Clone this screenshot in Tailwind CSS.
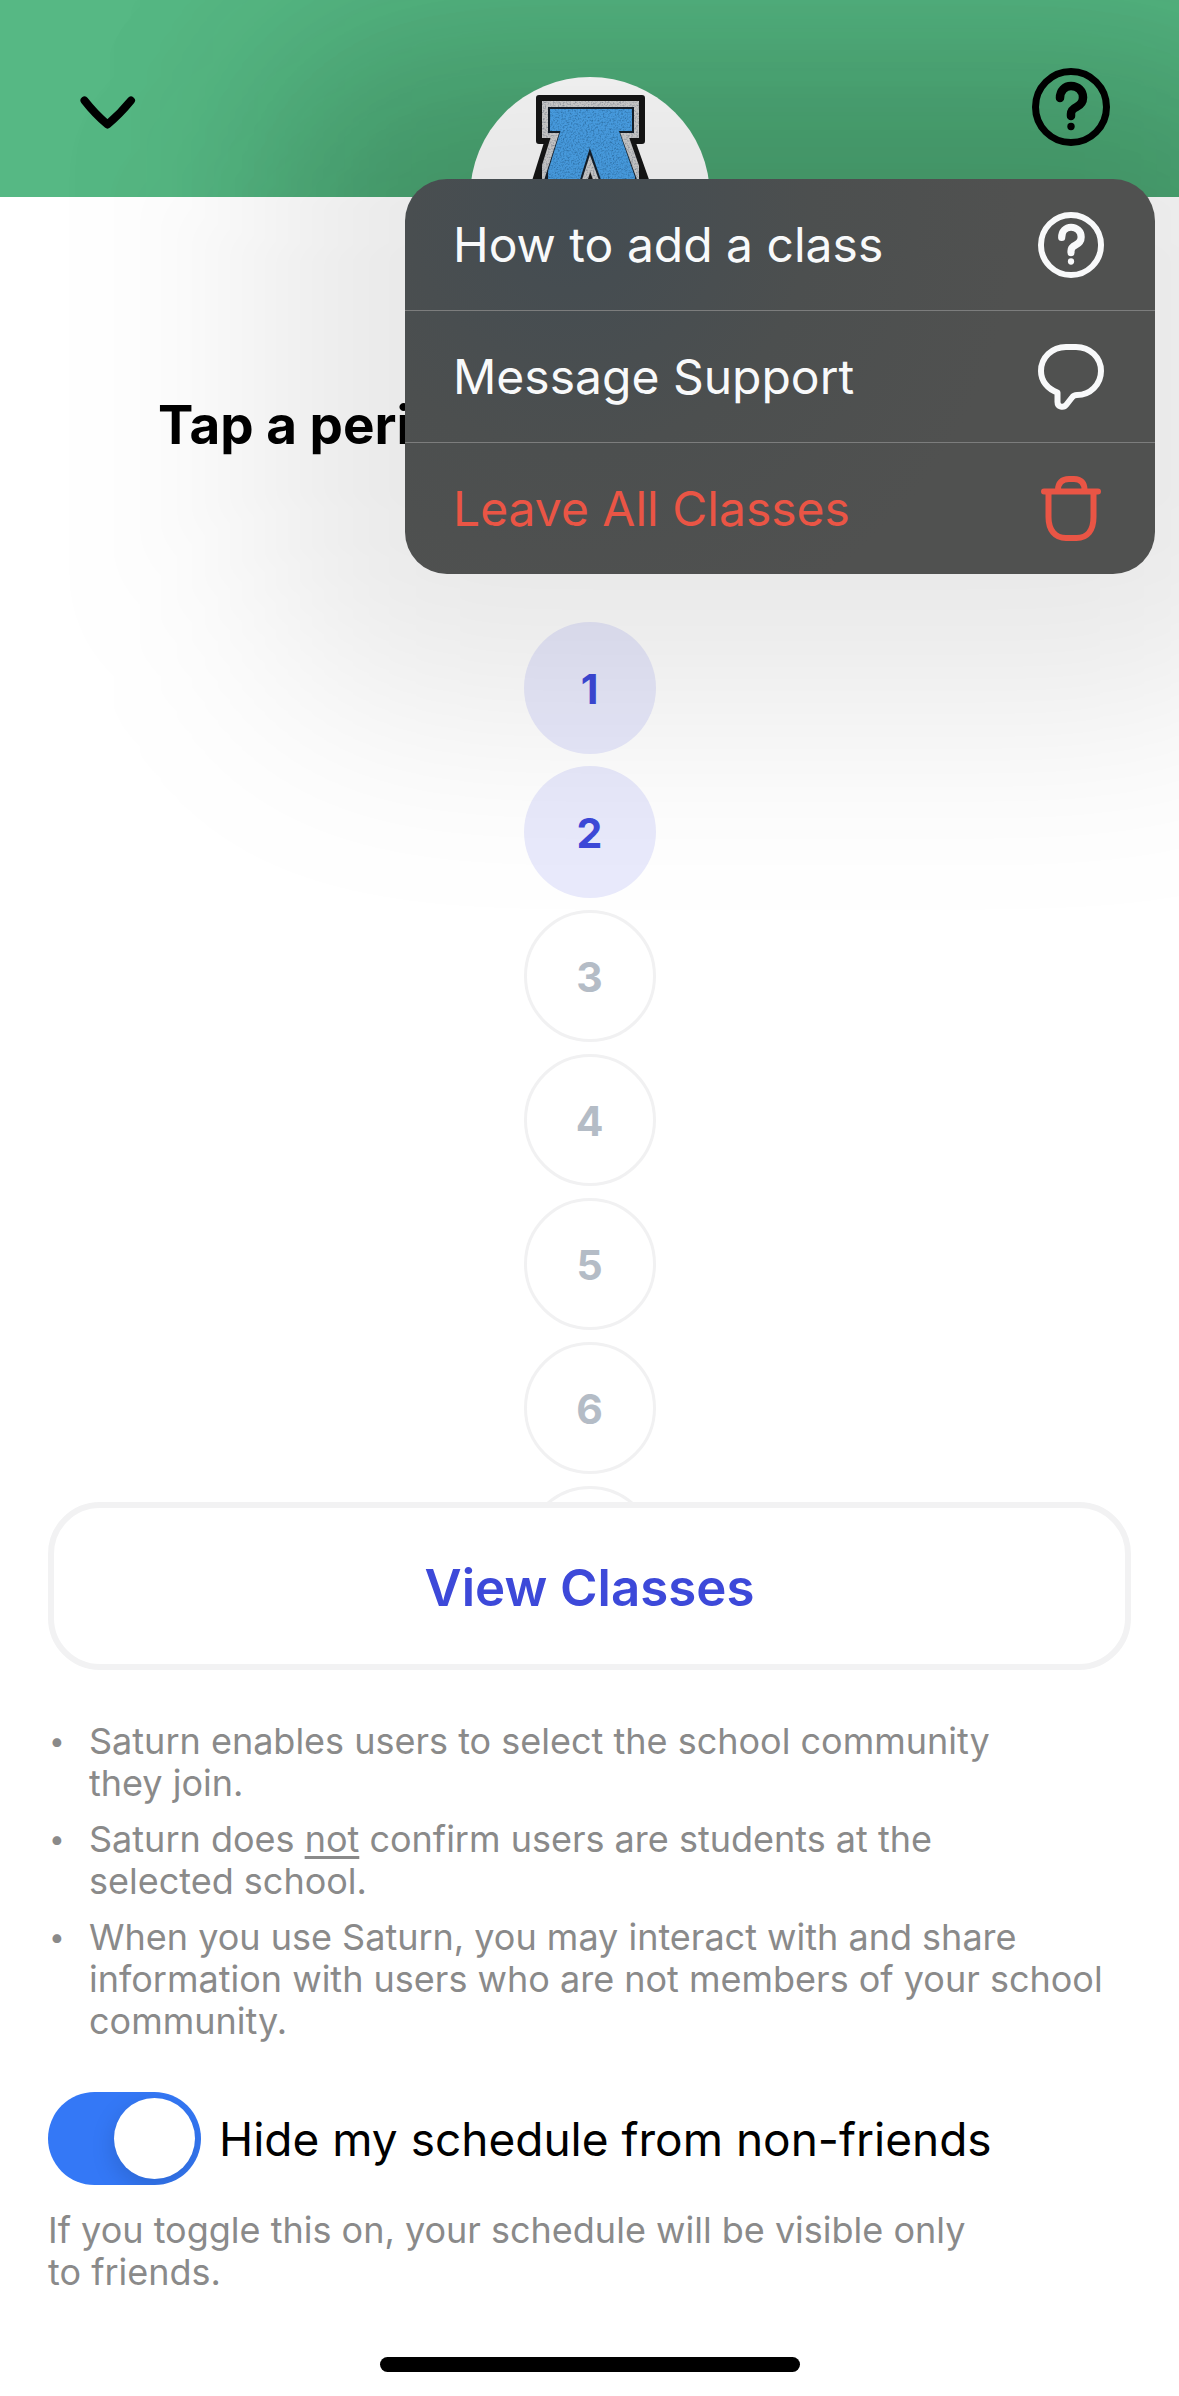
<!DOCTYPE html>
<html lang="en">

<head>
    <meta charset="UTF-8">
    <meta name="viewport" content="width=device-width, initial-scale=1.0">
    <title>Classes | Saturn</title>
    <script src="https://cdn.jsdelivr.net/npm/@tailwindcss/browser@4"></script>
</head>

<body class="font-['Inter','Liberation_Sans',sans-serif] bg-white text-black">
    <div class="relative flex flex-col h-screen overflow-hidden">

        <!-- Header -->
        <header class="relative grid grid-cols-3 items-start h-[197px] shrink-0 overflow-hidden bg-[#56b884]">
            <!-- Extra shade the menu casts on the green bar -->
            <div class="absolute top-[50px] -right-[110px] w-[1010px] h-[650px] rounded-[120px] bg-[#002800]/16 blur-[100px]"></div>

            <button class="relative justify-self-start ml-20 mt-24" aria-label="Close">
                <svg class="block w-14 h-[33px]" viewBox="0 0 56 33" fill="none" stroke="black" stroke-width="8"
                    stroke-linecap="round" stroke-linejoin="round">
                    <path d="M4.5 4.5Q15 18 27.500 28.500Q40 18 51 4.500" />
                </svg>
            </button>

            <div class="relative justify-self-center mt-[77px] size-60 rounded-full bg-[#fdfdfd] overflow-hidden">
                <!-- School emblem -->
                <svg class="block size-full" viewBox="0 0 240 240" role="img" aria-label="School emblem">
                    <defs>
                        <filter id="felt" x="0" y="0" width="1" height="1">
                            <feTurbulence type="fractalNoise" baseFrequency="0.6" numOctaves="2" result="noise" />
                            <feColorMatrix in="noise" type="matrix"
                                values="0 0 0 0 0  0 0 0 0 0.05  0 0 0 0 0.15  1.4 0 0 0 -0.6" result="grain" />
                            <feComposite in="grain" in2="SourceGraphic" operator="in" result="cut" />
                            <feMerge>
                                <feMergeNode in="SourceGraphic" />
                                <feMergeNode in="cut" />
                            </feMerge>
                        </filter>
                    </defs>
                    <g stroke="#161616" fill="#161616">
                        <rect x="67" y="19" width="107" height="47" rx="2" stroke-width="2" />
                        <line x1="109" y1="54" x2="79" y2="150" stroke-width="60" />
                        <line x1="130" y1="54" x2="164" y2="150" stroke-width="60" />
                    </g>
                    <g stroke="#d4d4d4" fill="#d4d4d4" filter="url(#felt)">
                        <rect x="72" y="24" width="97" height="37" stroke-width="0" />
                        <line x1="109" y1="50" x2="78" y2="150" stroke-width="48" />
                        <line x1="130" y1="50" x2="165" y2="150" stroke-width="48" />
                    </g>
                    <g stroke="#15202c" fill="#15202c">
                        <rect x="79" y="31" width="84" height="24" stroke-width="2" />
                        <line x1="109" y1="53" x2="78" y2="150" stroke-width="36" />
                        <line x1="130" y1="53" x2="165" y2="150" stroke-width="36" />
                    </g>
                    <g stroke="#4ea6ee" fill="#4ea6ee" filter="url(#felt)">
                        <rect x="80" y="32" width="82" height="22" stroke-width="0" />
                        <line x1="109" y1="50" x2="78" y2="150" stroke-width="33" />
                        <line x1="130" y1="50" x2="165" y2="150" stroke-width="33" />
                    </g>
                </svg>
            </div>

            <button class="relative justify-self-end mr-[69px] mt-[68px]" aria-label="Help">
                <svg class="block size-[78px]" viewBox="0 0 78 78" fill="none" stroke="black" stroke-width="7">
                    <circle cx="39" cy="39" r="35.500" />
                    <path stroke-width="8.500" stroke-linecap="round" stroke-linejoin="round"
                        d="M28 30C28 22.500 33 18 39 18C46 18 51 23 51 29.500C51 34 48.500 37 44.500 39C40.500 41 39 42.500 39 46V48" />
                    <circle cx="39" cy="58.500" r="3.700" fill="black" stroke="none" />
                </svg>
            </button>
        </header>

        <!-- Periods -->
        <main class="flex-1 min-h-0 overflow-hidden">
            <h1 class="mt-[196px] pl-[158px] text-[53px] leading-[64px] font-bold whitespace-nowrap">Tap a period to add classes</h1>
            <ul class="mt-[165px] flex flex-col items-center gap-3 text-[41px] font-bold text-[#b4bcc6]">
                <li><button class="block size-[132px] pt-1 rounded-full bg-[#e9eafc] text-[#3d49d9]">1</button></li>
                <li><button class="block size-[132px] pt-1 rounded-full bg-[#e9eafc] text-[#3d49d9]">2</button></li>
                <li><button class="block size-[132px] pt-1 rounded-full border-3 border-[#f1f1f2]">3</button></li>
                <li><button class="block size-[132px] pt-1 rounded-full border-3 border-[#f1f1f2]">4</button></li>
                <li><button class="block size-[132px] pt-1 rounded-full border-3 border-[#f1f1f2]">5</button></li>
                <li><button class="block size-[132px] pt-1 rounded-full border-3 border-[#f1f1f2]">6</button></li>
                <li><button class="block size-[132px] pt-1 rounded-full border-3 border-[#f1f1f2]" aria-label="7"></button></li>
            </ul>
        </main>

        <!-- Footer -->
        <footer class="shrink-0 px-12 pb-6 text-[36px] leading-[42px] text-[#8a8a8a]">
            <button class="block w-full h-[168px] pt-1 rounded-[52px] border-6 border-[#f2f2f3] bg-white text-[51px] font-semibold text-[#3d49d9]">View Classes</button>

            <ul class="mt-[50px] space-y-[14px] whitespace-nowrap">
                <li class="flex">
                    <span class="w-[41px] shrink-0 pl-px text-[28px]">•</span>
                    <p>Saturn enables users to select the school community<br>they join.</p>
                </li>
                <li class="flex">
                    <span class="w-[41px] shrink-0 pl-px text-[28px]">•</span>
                    <p>Saturn does <u class="decoration-3 underline-offset-4">not</u> confirm users are students at the<br>selected school.</p>
                </li>
                <li class="flex">
                    <span class="w-[41px] shrink-0 pl-px text-[28px]">•</span>
                    <p>When you use Saturn, you may interact with and share<br>information with users who are not members of your school<br>community.</p>
                </li>
            </ul>

            <div class="mt-[50px] flex items-center gap-[18px]">
                <input type="checkbox" id="hide-schedule" checked
                    class="appearance-none flex items-center shrink-0 w-[153px] h-[93px] p-[6px] rounded-full bg-gray-200 checked:bg-[#3478f6] checked:justify-end overflow-hidden before:size-[81px] before:rounded-full before:bg-white before:shadow-[0_8px_24px_rgba(0,0,0,0.15)]">
                <label for="hide-schedule" class="text-[46px] leading-[56px] text-black">Hide my schedule from non-friends</label>
            </div>
            <p class="mt-6">If you toggle this on, your schedule will be visible only<br>to friends.</p>

            <!-- Home indicator -->
            <div class="mt-16 mx-auto w-[420px] h-[15px] rounded-full bg-black"></div>
        </footer>

        <!-- Help menu -->
        <div class="absolute top-[179px] right-6 w-[750px]">
            <!-- Soft shadow -->
            <div class="absolute -inset-[140px] rounded-[140px] bg-black/9 blur-[105px] pointer-events-none"></div>
            <nav class="relative rounded-[42px] bg-[#505150] bg-[radial-gradient(circle_at_22%_8%,#434c52,#4c4f4f_35%,#505150_65%)] text-[48px] text-[#f8f9fa] divide-y divide-[#7c7d7d] overflow-hidden">
                <button class="flex items-center justify-between w-full h-[132px] pl-12 pr-[51px]">
                    How to add a class
                    <svg class="size-[66px]" viewBox="0 0 78 78" fill="none" stroke="currentColor" stroke-width="7">
                        <circle cx="39" cy="39" r="35.500" />
                        <path stroke-width="8.500" stroke-linecap="round" stroke-linejoin="round"
                            d="M28 30C28 22.500 33 18 39 18C46 18 51 23 51 29.500C51 34 48.500 37 44.500 39C40.500 41 39 42.500 39 46V48" />
                        <circle cx="39" cy="58.500" r="3.700" fill="currentColor" stroke="none" />
                    </svg>
                </button>
                <button class="flex items-center justify-between w-full h-[132px] pl-12 pr-[51px]">
                    Message Support
                    <svg class="size-[66px]" viewBox="0 0 66 66" fill="none" stroke="currentColor" stroke-width="6"
                        stroke-linejoin="round">
                        <path
                            d="M28 3H38C52 3 63 13.500 63 27S52 51 39 51C36.500 51 35.500 51.500 34 53.500L28.500 60.500C25.500 64.500 19.500 63 19.500 58V48.500C9.500 45 3 37 3 27C3 13.500 14 3 28 3Z" />
                    </svg>
                </button>
                <button class="flex items-center justify-between w-full h-[131px] pl-12 pr-[51px] text-[#ea5545]">
                    Leave All Classes
                    <svg class="size-[66px]" viewBox="0 0 66 66" fill="none" stroke="currentColor" stroke-width="6"
                        stroke-linecap="round">
                        <path
                            d="M6 15.500H60M10.500 17V41C10.500 54 17 62 28 62H38.500C49.500 62 55.500 54 55.500 41V17M20 14C20 7 24 3 31 3H36C43 3 46.500 7 46.500 14" />
                    </svg>
                </button>
            </nav>
        </div>

    </div>
</body>

</html>
